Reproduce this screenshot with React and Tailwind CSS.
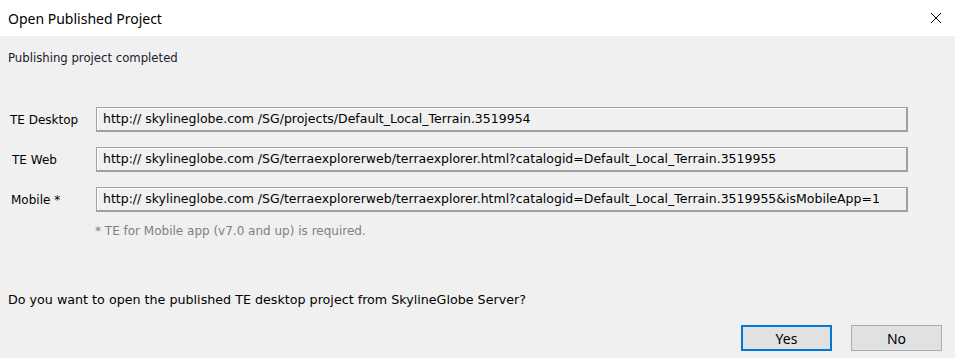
import React from 'react';

const rows = [
    { label: 'TE Desktop', pl: 'pl-[10px]', url: 'http:// skylineglobe.com /SG/projects/Default_Local_Terrain.3519954' },
    { label: 'TE Web', pl: 'pl-[12px]', url: 'http:// skylineglobe.com /SG/terraexplorerweb/terraexplorer.html?catalogid=Default_Local_Terrain.3519955' },
    { label: 'Mobile *', pl: 'pl-[11px]', url: 'http:// skylineglobe.com /SG/terraexplorerweb/terraexplorer.html?catalogid=Default_Local_Terrain.3519955&isMobileApp=1' },
];

export default function App() {
    return (
        <div className="w-[955px] h-[358px] flex flex-col bg-[#f0f0f0] overflow-hidden text-[12.5px] text-black" style={{ fontFamily: '"DejaVu Sans", Verdana, sans-serif' }}>
            {/* title bar */}
            <div className="h-[36px] bg-white flex items-center justify-between pl-[8px] pr-[13px] shrink-0">
                <span className="text-[14px] text-black" style={{ fontFamily: '"Noto Sans", "Open Sans", sans-serif' }}>Open Published Project</span>
                <svg width="12" height="12" viewBox="0 0 12 12">
                    <path d="M1 1 L11 11 M11 1 L1 11" stroke="#000" strokeWidth="1" fill="none" />
                </svg>
            </div>

            <div className="pl-[8px] pt-[15px] h-[20px] leading-[14px] text-[11.7px] text-[#1a1a2e]">Publishing project completed</div>

            <div className="flex flex-col gap-[15px] mt-[51px]">
                {rows.map((r) => (
                    <div key={r.label} className="flex items-center h-[25px]">
                        <div className={`w-[96px] ${r.pl} shrink-0 text-[12px]`}>{r.label}</div>
                        <div className="w-[812px] h-[25px] border border-[#a0a0a0] border-r-2 border-b-2 shadow-[inset_1px_1px_0_#ffffff] bg-[#f0f0f0] flex items-center pl-[6px] whitespace-nowrap overflow-hidden">
                            {r.url}
                        </div>
                    </div>
                ))}
            </div>

            <div className="pl-[95px] mt-[12px] text-[12px] text-[#808080] leading-[14px]">* TE for Mobile app (v7.0 and up) is required.</div>

            <div className="pl-[8px] mt-[55px] text-[12.7px] leading-[14px]">Do you want to open the published TE desktop project from SkylineGlobe Server?</div>

            <div className="flex justify-end gap-[19px] pr-[13px] mt-[18px]">
                <button className="w-[91px] h-[26px] bg-[#e1e1e1] border-2 border-[#0078d7] text-[14px]" style={{ fontFamily: '"Noto Sans", "Open Sans", sans-serif' }}>Yes</button>
                <button className="w-[91px] h-[26px] bg-[#e1e1e1] border border-[#adadad] text-[14px]" style={{ fontFamily: '"Noto Sans", "Open Sans", sans-serif' }}>No</button>
            </div>
        </div>
    );
}
